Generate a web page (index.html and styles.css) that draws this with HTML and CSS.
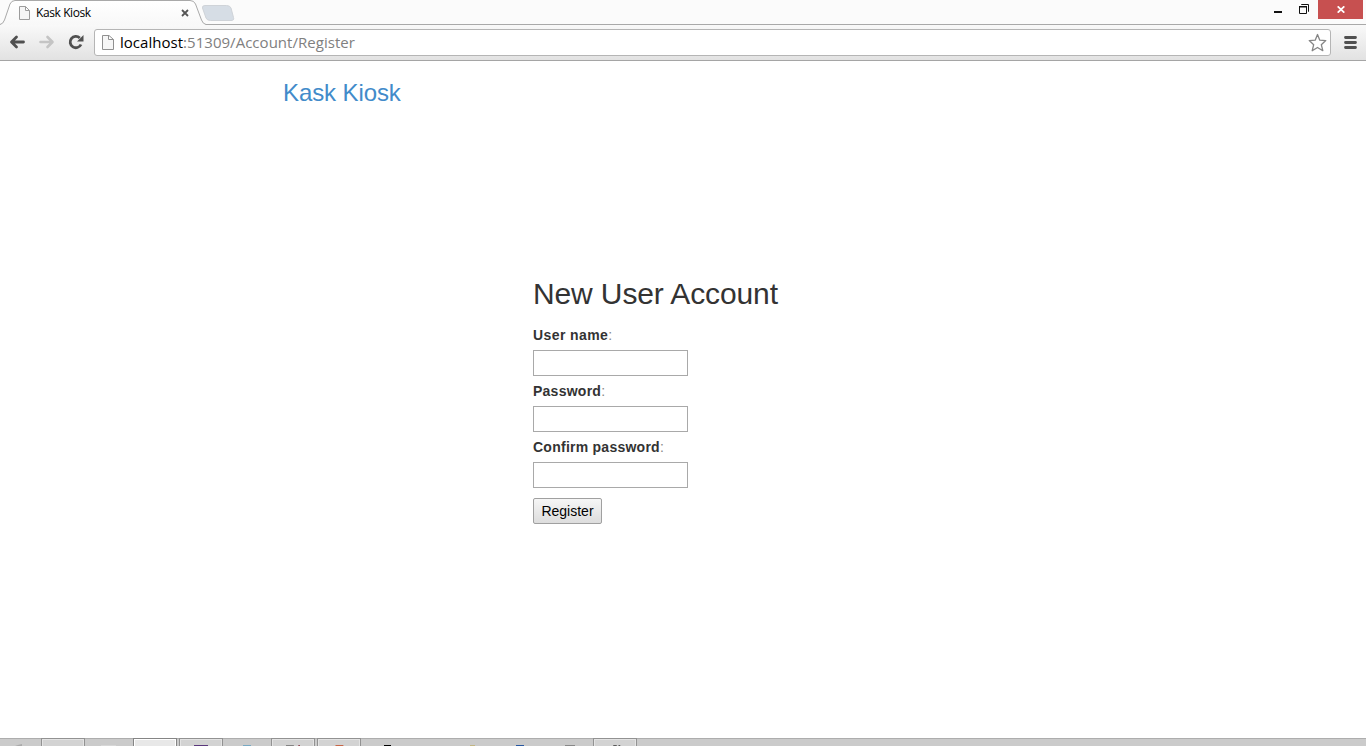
FILE: index.html
```html
<!DOCTYPE html>
<html lang="en">
<head>
<meta charset="utf-8">
<title>Kask Kiosk</title>
<link rel="stylesheet" href="styles.css">
</head>
<body>
<div class="window">
  <header class="tabstrip">
    <svg class="tab-shape" width="240" height="25" viewBox="0 0 240 25">
      <defs><linearGradient id="tabfill" x1="0" y1="0" x2="0" y2="1"><stop offset="0" stop-color="#fff"/><stop offset="1" stop-color="#f8f8f8"/></linearGradient></defs>
      <path d="M205 5.500H226.500Q230 5.500 231 8L233.500 17.500Q234.500 20.500 231 20.500H210.500Q207 20.500 206 18L202.500 8Q202 5.500 205 5.500Z" fill="#d6dde5" stroke="#cfd3d8"/>
      <path d="M0 24.500Q3 24 4.500 20L10 4Q11.500 .5 15 .5H190Q194 .5 195.500 4L201.500 20Q203 24 206 24.500V25H0Z" fill="url(#tabfill)"/>
      <path d="M0 24.500Q3 24 4.500 20L10 4Q11.500 .5 15 .5H190Q194 .5 195.500 4L201.500 20Q203 24 206 24.500H240" fill="none" stroke="#a9a9a9"/>
    </svg>
    <div class="tab">
      <svg width="12" height="14" viewBox="0 0 12 14"><path d="M1.500.5H7.500L11.500 4.500V13.500H1.500ZM7.500 .5V4.500H11.500" fill="#f5f5f5" stroke="#9c9c9c"/></svg>
      <span class="tab-title">Kask Kiosk</span>
      <svg class="tab-close" width="8" height="8" viewBox="0 0 8 8"><path d="M1 1L7 7M7 1L1 7" stroke="#555" stroke-width="1.800"/></svg>
    </div>
    <div class="controls">
      <svg width="8" height="24" viewBox="0 0 8 24"><path d="M0 11H8V13H0Z" fill="#111"/></svg>
      <svg class="restore" width="11" height="24" viewBox="0 0 11 24"><path d="M.5 6.500H7.500V13.500H.5ZM2.500 5V4.500H9.500V11.500H9" fill="none" stroke="#111"/><path d="M0 6H8V7.500H0Z" fill="#111"/></svg>
      <div class="close"><svg width="8" height="7" viewBox="0 0 8 7"><path d="M.7.3L7.300 6.700M7.300.3L.7 6.700" stroke="#fff" stroke-width="1.700"/></svg></div>
    </div>
  </header>
  <div class="toolbar">
    <svg class="back" width="16" height="14" viewBox="0 0 16 14"><path d="M7.500 2L2.500 7L7.500 12M3 7H14.500" fill="none" stroke="#505050" stroke-width="2.800" stroke-linecap="round" stroke-linejoin="round"/></svg>
    <svg class="forward" width="16" height="14" viewBox="0 0 16 14"><path d="M8.500 2L13.500 7L8.500 12M13 7H1.500" fill="none" stroke="#c4c4c4" stroke-width="2.600" stroke-linecap="round" stroke-linejoin="round"/></svg>
    <svg class="reload" width="16" height="16" viewBox="0 0 16 16"><path d="M13 10.500A5.700 5.700 0 1 1 11.800 3.900" fill="none" stroke="#505050" stroke-width="2.800"/><path d="M15.500 1V7.500H9Z" fill="#505050"/></svg>
    <div class="omnibox">
      <svg width="13" height="16" viewBox="0 0 13 16"><path d="M1.500.5H8L12.500 4.500V14.500H1.500ZM7.500.5V4.500H12.500" fill="#f6f6f6" stroke="#909090"/></svg>
      <span class="url"><span class="host">localhost</span>:51309/Account/Register</span>
      <svg class="star" width="20" height="20" viewBox="0 0 20 20"><path d="M10.500 1.500L12.800 7.200L18.800 7.600L14.300 11.700L15.800 17.700L10.500 14.500L5.200 17.700L6.700 11.700L2.200 7.600L8.200 7.200Z" fill="#fff" stroke="#858585" stroke-width="1.300" stroke-linejoin="round"/></svg>
    </div>
    <svg class="menu" width="13" height="13" viewBox="0 0 13 13"><path d="M1.500 1.500H11.500M1.500 6.500H11.500M1.500 11.500H11.500" stroke="#505050" stroke-width="2.800" stroke-linecap="round"/></svg>
  </div>
  <main class="page">
    <a class="brand">Kask Kiosk</a>
    <form class="register">
      <h1 class="heading">New User Account</h1>
      <label class="label" for="user"><b class="label-user">User name</b>:</label>
      <input class="field" id="user" type="text">
      <label class="label" for="pass"><b>Password</b>:</label>
      <input class="field" id="pass" type="password">
      <label class="label" for="confirm"><b class="label-confirm">Confirm password</b>:</label>
      <input class="field" id="confirm" type="password">
      <button class="submit" type="button">Register</button>
    </form>
  </main>
  <footer class="taskbar">
    <svg class="task" viewBox="0 0 44 8"><path d="M23 7L27 6V8H20Z" fill="#aaa"/></svg>
    <svg class="task open" viewBox="0 0 44 8"></svg>
    <svg class="task" viewBox="0 0 44 8"><path d="M14 7H29V8H14Z" fill="#d7d7d7"/></svg>
    <svg class="task active" viewBox="0 0 44 8"></svg>
    <svg class="task open" viewBox="0 0 44 8"><path d="M14 7H30V8H14Z" fill="#49206f"/></svg>
    <svg class="task" viewBox="0 0 44 8"><path d="M18 7H26V8H18Z" fill="#78a9c3"/></svg>
    <svg class="task open" viewBox="0 0 44 8"><path d="M14 7H23V8H14Z" fill="#777"/><path d="M28 7H30V8H28Z" fill="#802033"/></svg>
    <svg class="task open" viewBox="0 0 44 8"><path d="M18 7H27V8H18Z" fill="#c65734"/></svg>
    <svg class="task" viewBox="0 0 44 8"><path d="M21 7H28V8H21Z" fill="#000"/></svg>
    <svg class="task" viewBox="0 0 44 8"></svg>
    <svg class="task" viewBox="0 0 44 8"><path d="M15 7H20V8H15Z" fill="#c2b582"/></svg>
    <svg class="task" viewBox="0 0 44 8"><path d="M15 7H23V8H15Z" fill="#2857a0"/></svg>
    <svg class="task" viewBox="0 0 44 8"><path d="M18 7H28V8H18Z" fill="#888"/></svg>
    <svg class="task open" viewBox="0 0 44 8"><path d="M20 7H24V8H20ZM26 7H28V8H26Z" fill="#333"/></svg>
  </footer>
</div>
</body>
</html>
```
FILE: styles.css
```css
* { box-sizing: border-box; }
body { margin: 0; overflow: hidden; font-family: "Liberation Sans", Arial, sans-serif; }
svg { display: block; flex: none; }
.window { width: 1366px; height: 746px; display: flex; flex-direction: column; background: #fff; }
.tabstrip { height: 24px; flex: none; display: flex; position: relative; background: #fbfbfb; }
.tab-shape { position: absolute; left: 0; top: 0; z-index: 1; }
.tab { position: relative; z-index: 2; display: flex; align-items: center; width: 200px; height: 26px; padding-left: 18px; }
.tab-title { margin-left: 6px; padding-bottom: 1px; width: 145px; font: 12px "Open Sans", sans-serif; letter-spacing: -0.4px; color: #000; white-space: nowrap; }
.controls { margin-left: auto; display: flex; padding-right: 3px; }
.restore { margin: 0 8px 0 17px; }
.close { width: 45px; height: 19px; display: flex; align-items: center; justify-content: center; background: #c75050; }
.toolbar { height: 37px; flex: none; display: flex; align-items: center; padding: 0 9px; border-top: 1px solid #a9a9a9; border-bottom: 1px solid #a5a5a5; background: linear-gradient(#f9f9f9, #e2e2e2); }
.back, .forward, .reload { margin-bottom: 1px; }
.forward { margin-left: 14px; }
.reload { margin-left: 13px; }
.omnibox { width: 1237px; height: 27px; margin-left: 10px; padding: 0 3px 0 6px; border: 1px solid #b5b5b5; border-radius: 3px; background: #fff; display: flex; align-items: center; }
.url { margin-left: 6px; padding-bottom: 2px; font: 15px "Open Sans", sans-serif; letter-spacing: 0.03px; color: #808080; white-space: nowrap; }
.host { color: #000; }
.star { margin-left: auto; }
.menu { margin-left: 13px; }
.page { flex: 1; display: flex; flex-direction: column; }
.brand { margin: 18px 0 0 283px; height: 28px; line-height: 28px; font-size: 24px; letter-spacing: -0.1px; color: #428bca; }
.register { margin: 169px 0 0 533px; display: flex; flex-direction: column; align-items: flex-start; font-size: 14px; color: #333; }
.heading { margin: 0; height: 36px; line-height: 36px; font-size: 30px; font-weight: 400; letter-spacing: -0.12px; white-space: nowrap; }
.label { height: 20px; margin-top: 13px; line-height: 20px; color: #888; }
.label b { color: #333; letter-spacing: 0.25px; }
.label .label-user { letter-spacing: 0.4px; }
.field + .label { margin-top: 5px; }
.field { width: 155px; height: 26px; margin: 5px 0 0; border: 1px solid #a9a9a9; background: #fff; }
.submit { width: 69px; height: 26px; margin-top: 10px; padding: 0; border: 1px solid #a0a0a0; border-radius: 2px; background: linear-gradient(#f6f6f6, #ddd); font: 14px "Liberation Sans", Arial, sans-serif; color: #000; }
.taskbar { height: 8px; flex: none; display: flex; gap: 2px; background: #cbcbcb; border-top: 1px solid #adadad; }
.task { width: 44px; height: 8px; margin-top: -1px; }
.task:first-child { margin-left: -5px; }
.open, .active { border: 1px solid #929292; border-bottom: 0; background: #d3d3d3; box-shadow: inset 0 1px #e4e4e4, inset 1px 0 #e4e4e4, inset -1px 0 #e4e4e4; }
.active { border-color: #858585; background: #e8e8e8; box-shadow: inset 0 1px #fff, inset 1px 0 #fff, inset -1px 0 #fff; }
```
